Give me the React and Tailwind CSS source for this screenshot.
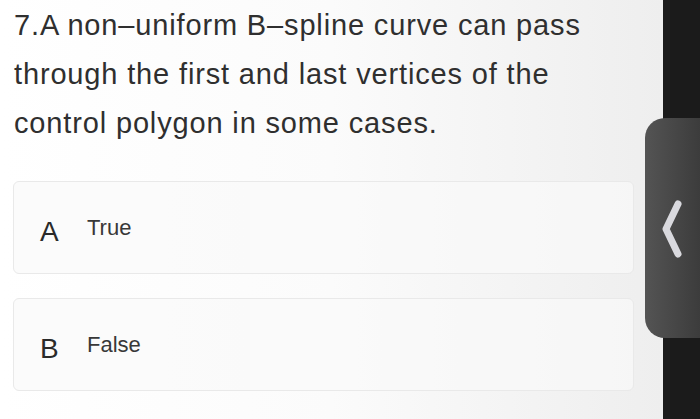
import React from 'react';

const options = [
  { key: 'A', label: 'True' },
  { key: 'B', label: 'False' },
];

const App = () => {
  return (
    <div
      className="relative w-[700px] h-[419px] overflow-hidden flex bg-white"
      style={{ fontFamily: '"Liberation Sans", Arial, sans-serif' }}
    >
      {/* main question */}
      <div className="flex-1 bg-gradient-to-r from-white via-[#fbfbfb] to-[#eeeeee] pl-[13px] pr-[29px]">
        <p className="pl-px pt-[1px] text-[29px] leading-[49px] text-[#2f2f2f] tracking-[0.85px] whitespace-nowrap">
          7.A non–uniform B–spline curve can pass
          <br />
          through the first and last vertices of the
          <br />
          control polygon in some cases.
        </p>

        <div className="mt-[33px] flex flex-col gap-[24px]">
          {options.map((opt) => (
            <div
              key={opt.key}
              className="h-[93px] rounded-[6px] border border-[#e9e9e9] bg-[#fafafa]/70 flex items-center pl-[26px]"
            >
              <span className="w-[47px] text-[28px] text-[#2a2a2a] pt-[8px]">{opt.key}</span>
              <span className="text-[22px] text-[#383838]">{opt.label}</span>
            </div>
          ))}
        </div>
      </div>

      {/* dark edge */}
      <div className="w-[37px] bg-[#1b1b1b]" />

      {/* side tab */}
      <div className="absolute left-[645px] top-[118px] w-[55px] h-[220px] rounded-l-[20px] bg-gradient-to-r from-[#545454] to-[#3c3c3c] flex items-center pl-[16px]">
        <svg width="24" height="64" viewBox="0 0 24 64" className="mt-[4px]">
          <path
            d="M17 6 L5 31 L17 56"
            fill="none"
            stroke="#d9d9de"
            strokeWidth="7"
            strokeLinecap="round"
            strokeLinejoin="round"
          />
        </svg>
      </div>
    </div>
  );
};

export default App;
